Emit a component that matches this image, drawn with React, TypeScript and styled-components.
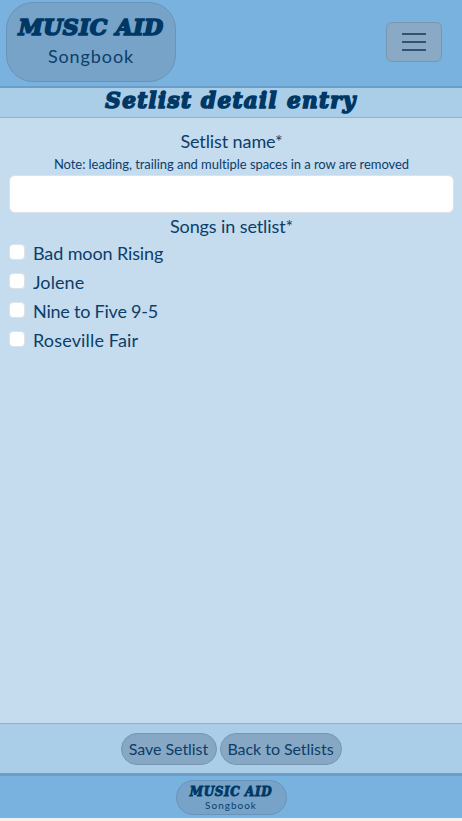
import React from 'react';
import styled, { createGlobalStyle } from 'styled-components';

const Global = createGlobalStyle`
  *, *::before, *::after { box-sizing: border-box; }
  body {
    margin: 0;
    background: #f0f1f2;
    color: #0c3e69;
    font: 400 18px/27px Lato, sans-serif;
    font-variant-ligatures: none;
  }
`;

const Page = styled.div`
  display: flex;
  flex-direction: column;
  height: 818px;
  background: #c5dbee;
`;

const Header = styled.header`
  display: flex;
  justify-content: space-between;
  align-items: flex-start;
  flex: none;
  height: 88px;
  padding: 2px 20px 0 6px;
  background: #79b2df;
  border-bottom: 2px solid #6b9dc6;
`;

const Display = styled.span<{ $size: number; $spacing: number; $stroke: number }>`
  display: block;
  color: #003865;
  font: italic 700 ${p => p.$size}px/1 'DejaVu Serif', serif;
  letter-spacing: ${p => p.$spacing}px;
  -webkit-text-stroke: ${p => p.$stroke}px #003865;
  white-space: nowrap;
`;

const Brand = styled.a<{ $small?: boolean }>`
  display: flex;
  flex-direction: column;
  align-items: center;
  width: ${p => (p.$small ? 111 : 170)}px;
  height: ${p => (p.$small ? 35 : 80)}px;
  padding-top: ${p => (p.$small ? 5 : 13)}px;
  background: #77a3c9;
  border: 1px solid #6994b9;
  border-radius: ${p => (p.$small ? 18 : 27)}px;
`;

const BrandSub = styled.span<{ $small?: boolean }>`
  font-size: ${p => (p.$small ? 10 : 18)}px;
  line-height: ${p => (p.$small ? 12 : 27)}px;
  letter-spacing: ${p => (p.$small ? 1 : 0.9)}px;
  margin-top: ${p => (p.$small ? 1 : 5)}px;
`;

const MenuButton = styled.button`
  display: grid;
  place-items: center;
  width: 56px;
  height: 40px;
  margin-top: 20px;
  padding: 0;
  background: #89a9c5;
  border: 1px solid #7896b1;
  border-radius: 6px;
`;

const TitleBar = styled.h1`
  display: flex;
  justify-content: center;
  flex: none;
  height: 30px;
  margin: 0;
  padding-top: 2px;
  background: #aacde8;
  border-bottom: 1px solid #91b2ce;
`;

const Form = styled.main`
  flex: 1;
  padding: 10px 8px 0 9px;
  text-align: center;
`;

const Label = styled.label`
  display: block;
  height: 27px;
  letter-spacing: -0.1px;
`;

const Note = styled.div`
  height: 20px;
  font-size: 13px;
  line-height: 19px;
  letter-spacing: -0.06px;
`;

const NameInput = styled.input`
  display: block;
  width: 100%;
  height: 38px;
  background: #fff;
  border: 1px solid #dee2e6;
  border-radius: 6px;
`;

const SongRow = styled.label<{ $spacing: number }>`
  display: flex;
  height: 27px;
  margin-bottom: 2px;
  letter-spacing: ${p => p.$spacing}px;
  text-align: left;
`;

const Checkbox = styled.input`
  appearance: none;
  width: 16px;
  height: 16px;
  margin: 4px 8px 0 0;
  background: #fff;
  border: 1px solid #dee2e6;
  border-radius: 4px;
`;

const Actions = styled.div`
  display: flex;
  justify-content: center;
  gap: 3px;
  flex: none;
  height: 50px;
  padding-top: 9px;
  background: #aacde8;
  border-top: 1px solid #91b2ce;
`;

const Action = styled.button<{ $width: number }>`
  width: ${p => p.$width}px;
  height: 32px;
  padding: 0;
  background: #87a8c4;
  border: 1px solid #7896b1;
  border-radius: 16px;
  color: inherit;
  font: 400 16px/24px Lato, sans-serif;
  font-variant-ligatures: none;
  letter-spacing: -0.05px;
  white-space: nowrap;
`;

const Footer = styled.footer`
  display: flex;
  justify-content: center;
  flex: none;
  height: 45px;
  padding-top: 4px;
  background: #79b2df;
  border-top: 3px solid #6b9dc6;
`;

const songs = [
  { title: 'Bad moon Rising', spacing: -0.12 },
  { title: 'Jolene', spacing: 0.08 },
  { title: 'Nine to Five 9-5', spacing: -0.22 },
  { title: 'Roseville Fair', spacing: 0.16 },
];

export default function App() {
  return (
    <>
      <Global />
      <Page>
        <Header>
          <Brand>
            <Display $size={22} $spacing={0.4} $stroke={1.7}>MUSIC AID</Display>
            <BrandSub>Songbook</BrandSub>
          </Brand>
          <MenuButton aria-label="Menu">
            <svg width="30" height="30" viewBox="0 0 30 30" stroke="#35516b" strokeWidth="2">
              <path d="M3 7h24M3 15h24M3 23h24" />
            </svg>
          </MenuButton>
        </Header>
        <TitleBar>
          <Display $size={21.5} $spacing={1.35} $stroke={1.6}>Setlist detail entry</Display>
        </TitleBar>
        <Form>
          <Label htmlFor="name">Setlist name*</Label>
          <Note>Note: leading, trailing and multiple spaces in a row are removed</Note>
          <NameInput id="name" />
          <Label as="div">Songs in setlist*</Label>
          {songs.map(song => (
            <SongRow key={song.title} $spacing={song.spacing}>
              <Checkbox type="checkbox" />
              {song.title}
            </SongRow>
          ))}
        </Form>
        <Actions>
          <Action $width={96}>Save Setlist</Action>
          <Action $width={122}>Back to Setlists</Action>
        </Actions>
        <Footer>
          <Brand $small>
            <Display $size={12} $spacing={0.6} $stroke={0.8}>MUSIC AID</Display>
            <BrandSub $small>Songbook</BrandSub>
          </Brand>
        </Footer>
      </Page>
    </>
  );
}
